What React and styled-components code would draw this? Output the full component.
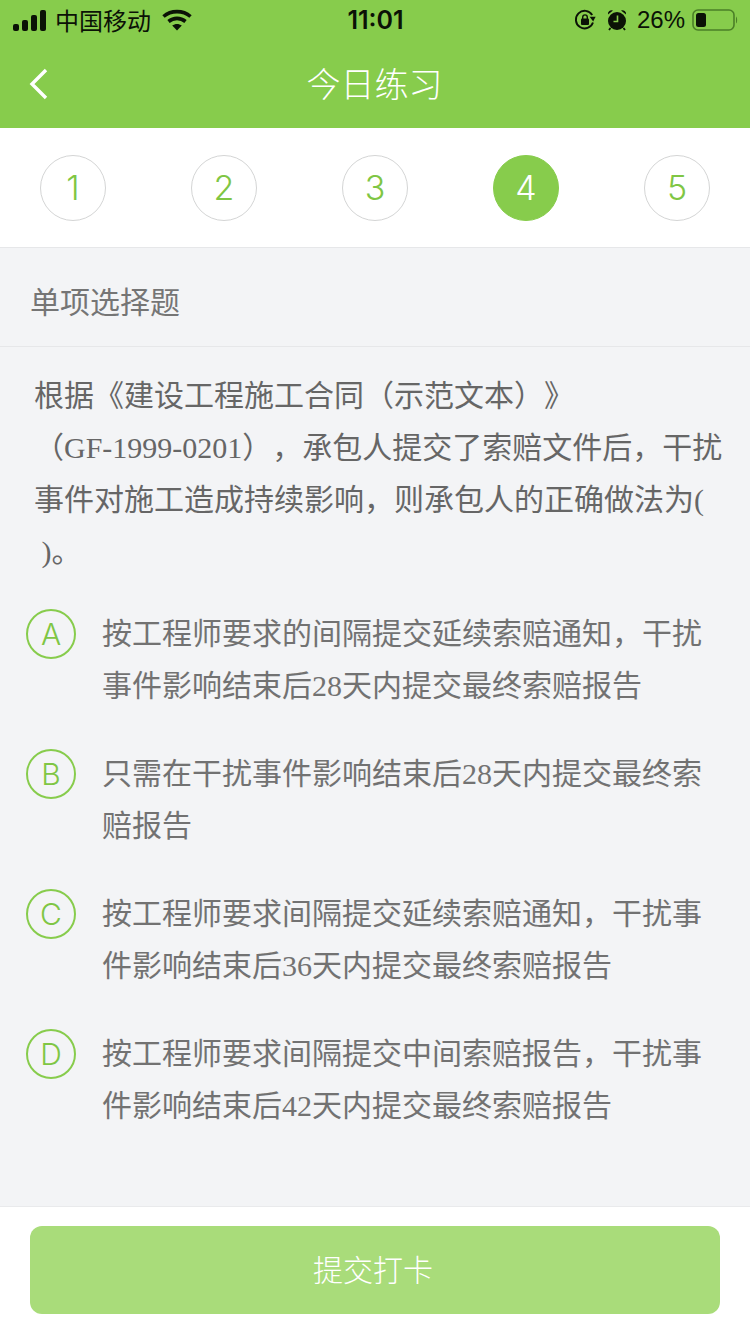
import React from "react";
import styled, { createGlobalStyle } from "styled-components";

const GlobalStyle = createGlobalStyle`
  html, body {
    margin: 0;
    padding: 0;
    background: #f3f4f6;
  }
  * {
    box-sizing: border-box;
  }
`;

const Page = styled.div`
  width: 750px;
  height: 1334px;
  display: flex;
  flex-direction: column;
  overflow: hidden;
  background: #f3f4f6;
  font-family: "Liberation Serif", "Noto Sans CJK SC", serif;
  text-spacing-trim: space-all;
`;

const Header = styled.header`
  height: 128px;
  background: #87cc4c;
  flex-shrink: 0;
`;

const StatusBar = styled.div`
  height: 40px;
  padding: 0 12px 0 13px;
  display: grid;
  grid-template-columns: 1fr auto 1fr;
  align-items: center;
  color: #0b1206;
  font-family: "Noto Sans CJK SC", sans-serif;
`;

const StatusLeft = styled.div`
  display: flex;
  align-items: center;
`;

const Carrier = styled.span`
  font-size: 24px;
  line-height: 40px;
  margin: 0 11px 0 9px;
`;

const Clock = styled.span`
  font-family: "Inter", sans-serif;
  font-size: 25px;
  font-weight: 600;
`;

const StatusRight = styled.div`
  display: flex;
  align-items: center;
  justify-content: flex-end;
`;

const Percent = styled.span`
  font-family: "Liberation Sans", sans-serif;
  font-size: 24px;
  margin: 0 7px 0 10px;
`;

const AlarmIcon = styled.svg`
  margin-left: 11px;
`;

const NavBar = styled.div`
  height: 88px;
  padding: 0 30px 4px 29px;
  display: grid;
  grid-template-columns: 1fr auto 1fr;
  align-items: center;
`;

const BackIcon = styled.svg`
  margin-top: 4px;
`;

const NavTitle = styled.h1`
  margin: 0;
  color: #fff;
  font-family: "Noto Sans CJK SC", sans-serif;
  font-weight: 300;
  font-size: 34px;
`;

const Steps = styled.div`
  height: 120px;
  padding: 0 40px;
  flex-shrink: 0;
  display: flex;
  align-items: center;
  justify-content: space-between;
  background: #fff;
  border-bottom: 1px solid #e6e7e9;
`;

const Step = styled.div`
  width: 66px;
  height: 66px;
  border-radius: 50%;
  display: flex;
  align-items: center;
  justify-content: center;
  font-family: "Inter", sans-serif;
  font-weight: 300;
  font-size: 34px;
  color: ${(props) => (props.$active ? "#fff" : "#7fc644")};
  background: ${(props) => (props.$active ? "#87cc4c" : "#fff")};
  border: 1px solid ${(props) => (props.$active ? "#87cc4c" : "#d4d5d5")};
`;

const SectionTitle = styled.div`
  height: 99px;
  padding: 6px 30px 0;
  flex-shrink: 0;
  display: flex;
  align-items: center;
  color: #757575;
  font-size: 30px;
  border-bottom: 1px solid #e6e7e9;
`;

const Question = styled.p`
  margin: 0;
  padding: 23px 26px 0 34px;
  color: #666;
  font-size: 30px;
  line-height: 52px;
`;

const Options = styled.div`
  padding: 30px 40px 0 26px;
  display: flex;
  flex-direction: column;
  gap: 36px;
`;

const Option = styled.div`
  display: flex;
  align-items: flex-start;
  gap: 26px;
`;

const OptionBadge = styled.div`
  width: 50px;
  height: 50px;
  margin-top: 1px;
  flex-shrink: 0;
  border-radius: 50%;
  border: 2px solid #87cc4c;
  display: flex;
  align-items: center;
  justify-content: center;
  color: #7fc644;
  font-family: "Inter", sans-serif;
  font-weight: 300;
  font-size: 30px;
`;

const OptionText = styled.div`
  color: #727272;
  font-size: 30px;
  line-height: 52px;
`;

const Footer = styled.footer`
  height: 128px;
  margin-top: auto;
  padding: 19px 30px 0;
  flex-shrink: 0;
  background: #fff;
  border-top: 1px solid #e9eaec;
`;

const SubmitButton = styled.button`
  display: block;
  width: 100%;
  height: 88px;
  padding: 0 4px 4px 0;
  border: 0;
  border-radius: 12px;
  background: #a9dc7a;
  color: #fff;
  font-family: "Noto Sans CJK SC", sans-serif;
  font-weight: 300;
  font-size: 30px;
`;

const options = [
  { key: "A", text: "按工程师要求的间隔提交延续索赔通知，干扰事件影响结束后28天内提交最终索赔报告" },
  { key: "B", text: "只需在干扰事件影响结束后28天内提交最终索赔报告" },
  { key: "C", text: "按工程师要求间隔提交延续索赔通知，干扰事件影响结束后36天内提交最终索赔报告" },
  { key: "D", text: "按工程师要求间隔提交中间索赔报告，干扰事件影响结束后42天内提交最终索赔报告" },
];

function Signal() {
  return (
    <svg width="33" height="21" viewBox="0 0 33 21" fill="currentColor" aria-hidden="true">
      <rect x="0" y="14" width="6" height="7" rx="2" />
      <rect x="9" y="10" width="6" height="11" rx="2" />
      <rect x="18" y="5" width="6" height="16" rx="2" />
      <rect x="27" y="0" width="6" height="21" rx="2" />
    </svg>
  );
}

function Wifi() {
  return (
    <svg width="30" height="22" viewBox="0 0 30 22" fill="none" stroke="currentColor" strokeWidth="3.6" aria-hidden="true">
      <path d="M1.5 7.5C9 1 21 1 28.5 7.5" />
      <path d="M6.5 12.5C11.5 8.3 18.5 8.3 23.5 12.5" />
      <path d="M15 21.5L10.2 16.6C13 14.4 17 14.4 19.8 16.6Z" fill="currentColor" stroke="none" />
    </svg>
  );
}

function RotationLock() {
  return (
    <svg width="22" height="22" viewBox="0 0 22 22" fill="none" aria-hidden="true">
      <path d="M19 13.5A8.8 8.8 0 1 1 18.2 6" stroke="currentColor" strokeWidth="1.9" />
      <path d="M15.6 7.8L21.6 7.8L19.2 12.4Z" fill="currentColor" />
      <rect x="7" y="9.5" width="8" height="6.5" rx="1" fill="currentColor" />
      <path d="M8.7 10V8.2a2.3 2.3 0 0 1 4.6 0V10" stroke="currentColor" strokeWidth="1.4" />
    </svg>
  );
}

function Alarm() {
  return (
    <AlarmIcon width="20" height="22" viewBox="0 0 20 22" aria-hidden="true">
      <circle cx="10" cy="12" r="9" fill="currentColor" />
      <path d="M1 5.5A3.6 3.6 0 0 1 6 1.5ZM19 5.5A3.6 3.6 0 0 0 14 1.5Z" fill="currentColor" />
      <path d="M3.5 19L2 21M16.5 19L18 21" stroke="currentColor" strokeWidth="1.8" />
      <path d="M10.5 6.5V12.5H6.5" fill="none" stroke="#87cc4c" strokeWidth="1.6" />
    </AlarmIcon>
  );
}

function Battery() {
  return (
    <svg width="46" height="24" viewBox="0 0 46 24" aria-hidden="true">
      <rect x="1" y="2" width="41" height="20" rx="5" fill="none" stroke="#4b7f27" strokeWidth="1.6" />
      <rect x="4" y="5" width="10" height="14" rx="2.5" fill="currentColor" />
      <path d="M44 8.5C45.5 9.5 45.5 14.5 44 15.5Z" fill="#4b7f27" />
    </svg>
  );
}

export default function App() {
  return (
    <Page lang="zh-CN">
      <GlobalStyle />
      <Header>
        <StatusBar>
          <StatusLeft>
            <Signal />
            <Carrier>中国移动</Carrier>
            <Wifi />
          </StatusLeft>
          <Clock>11:01</Clock>
          <StatusRight>
            <RotationLock />
            <Alarm />
            <Percent>26%</Percent>
            <Battery />
          </StatusRight>
        </StatusBar>
        <NavBar>
          <BackIcon width="20" height="32" viewBox="0 0 20 32" fill="none" stroke="#fff" strokeWidth="3.4" aria-hidden="true">
            <path d="M17 2L3 16L17 30" />
          </BackIcon>
          <NavTitle>今日练习</NavTitle>
        </NavBar>
      </Header>

      <Steps>
        {[1, 2, 3, 4, 5].map((n) => (
          <Step key={n} $active={n === 4}>
            {n}
          </Step>
        ))}
      </Steps>

      <SectionTitle>单项选择题</SectionTitle>

      <Question>
        根据《建设工程施工合同（示范文本）》
        <br />
        （GF-1999-0201），承包人提交了索赔文件后，干扰事件对施工造成持续影响，则承包人的正确做法为( {"\u00a0"})。
      </Question>

      <Options>
        {options.map((item) => (
          <Option key={item.key}>
            <OptionBadge>{item.key}</OptionBadge>
            <OptionText>{item.text}</OptionText>
          </Option>
        ))}
      </Options>

      <Footer>
        <SubmitButton>提交打卡</SubmitButton>
      </Footer>
    </Page>
  );
}
